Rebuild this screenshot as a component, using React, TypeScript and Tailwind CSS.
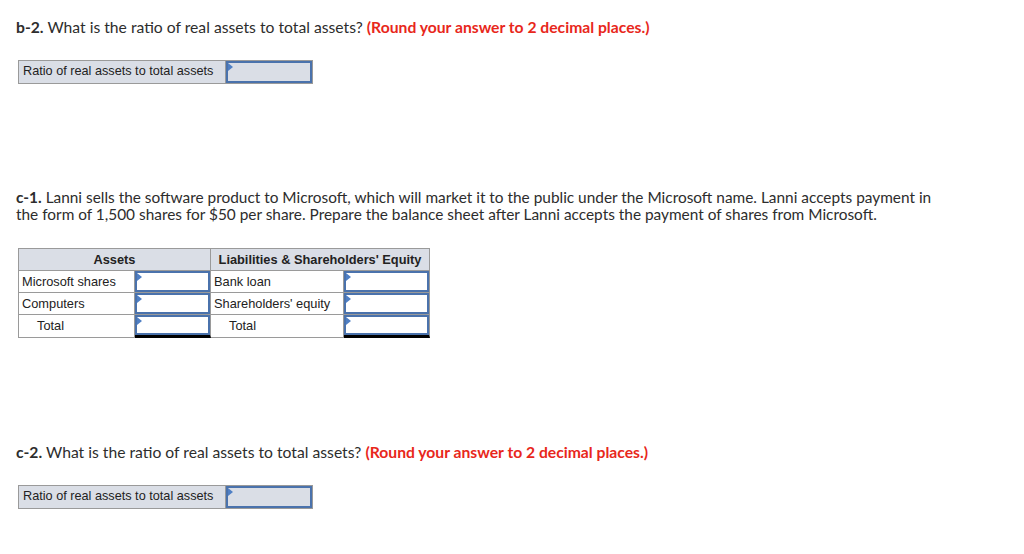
import React from 'react'

const body = "font-['Lato','Open_Sans',sans-serif]"
const cellFont = "font-['Liberation_Sans',Arial,sans-serif]"

function Marker() {
  return (
    <span className="absolute left-0 top-0 w-0 h-0 border-t-[4px] border-b-[4px] border-l-[5px] border-t-transparent border-b-transparent border-l-[#4f7fc4]" />
  )
}

function InputBox({ shaded = false }: { shaded?: boolean }) {
  return (
    <div className={`relative h-full w-full border-2 border-[#4a72ac] ${shaded ? 'bg-[#dadee6]' : 'bg-white'}`}>
      <Marker />
    </div>
  )
}

function RatioBox() {
  return (
    <div className={`flex ml-[18px] w-[295px] h-[24px] border border-[#9a9a9a] bg-[#dadee6] ${cellFont} text-[12.7px] text-[#222]`}>
      <div className="w-[207px] flex items-center pl-[4px] border-r border-[#9a9a9a]">Ratio of real assets to total assets</div>
      <div className="flex-1">
        <InputBox shaded />
      </div>
    </div>
  )
}

function Row({ a, l, total = false, last = false }: { a: string; l: string; total?: boolean; last?: boolean }) {
  const h = last ? 'h-[23px]' : 'h-[22px]'
  return (
    <div className={`flex ${h}`}>
      <div className={`w-[116px] flex items-center border-r border-b border-[#9a9a9a] ${total ? 'pl-[18px]' : 'pl-[3px]'}`}>{a}</div>
      <div className={`w-[76px] border-r border-[#9a9a9a] ${total ? 'border-b-[3px] border-b-black' : 'border-b'}`}>
        <InputBox />
      </div>
      <div className={`w-[133px] flex items-center border-r border-b border-[#9a9a9a] ${total ? 'pl-[18px]' : 'pl-[3px]'}`}>{l}</div>
      <div className={`w-[86px] border-r border-[#9a9a9a] ${total ? 'border-b-[3px] border-b-black' : 'border-b'}`}>
        <InputBox />
      </div>
    </div>
  )
}

export default function App() {
  return (
    <div className={`w-[1024px] h-[554px] bg-white text-[#2d2d2d] ${body} overflow-hidden`}>
      <p className="pt-[17px] pl-[16px] text-[15.7px] leading-[20px]">
        <span className="font-bold">b-2.</span> What is the ratio of real assets to total assets?{' '}
        <span className="font-bold text-[#e8271b]">(Round your answer to 2 decimal places.)</span>
      </p>

      <div className="mt-[23px]">
        <RatioBox />
      </div>

      <p className="mt-[105px] pl-[16px] w-[935px] text-[15.4px] leading-[17px]">
        <span className="font-bold">c-1.</span> Lanni sells the software product to Microsoft, which will market it to the public under the Microsoft name. Lanni accepts payment in the form of 1,500 shares for $50 per share. Prepare the balance sheet after Lanni accepts the payment of shares from Microsoft.
      </p>

      <div className={`mt-[25px] ml-[18px] w-[412px] border-l border-t border-[#9a9a9a] ${cellFont} text-[12.8px] text-[#222]`}>
        <div className="flex h-[22px] bg-[#dadee6] font-bold">
          <div className="w-[192px] flex items-center justify-center border-r border-b border-[#9a9a9a]">Assets</div>
          <div className="w-[219px] flex items-center justify-center border-r border-b border-[#9a9a9a]">Liabilities &amp; Shareholders' Equity</div>
        </div>
        <Row a="Microsoft shares" l="Bank loan" />
        <Row a="Computers" l="Shareholders' equity" />
        <Row a="Total" l="Total" total last />
      </div>

      <p className="mt-[104px] pl-[16px] text-[15.7px] leading-[20px]">
        <span className="font-bold">c-2.</span> What is the ratio of real assets to total assets?{' '}
        <span className="font-bold text-[#e8271b]">(Round your answer to 2 decimal places.)</span>
      </p>

      <div className="mt-[23px]">
        <RatioBox />
      </div>
    </div>
  )
}
